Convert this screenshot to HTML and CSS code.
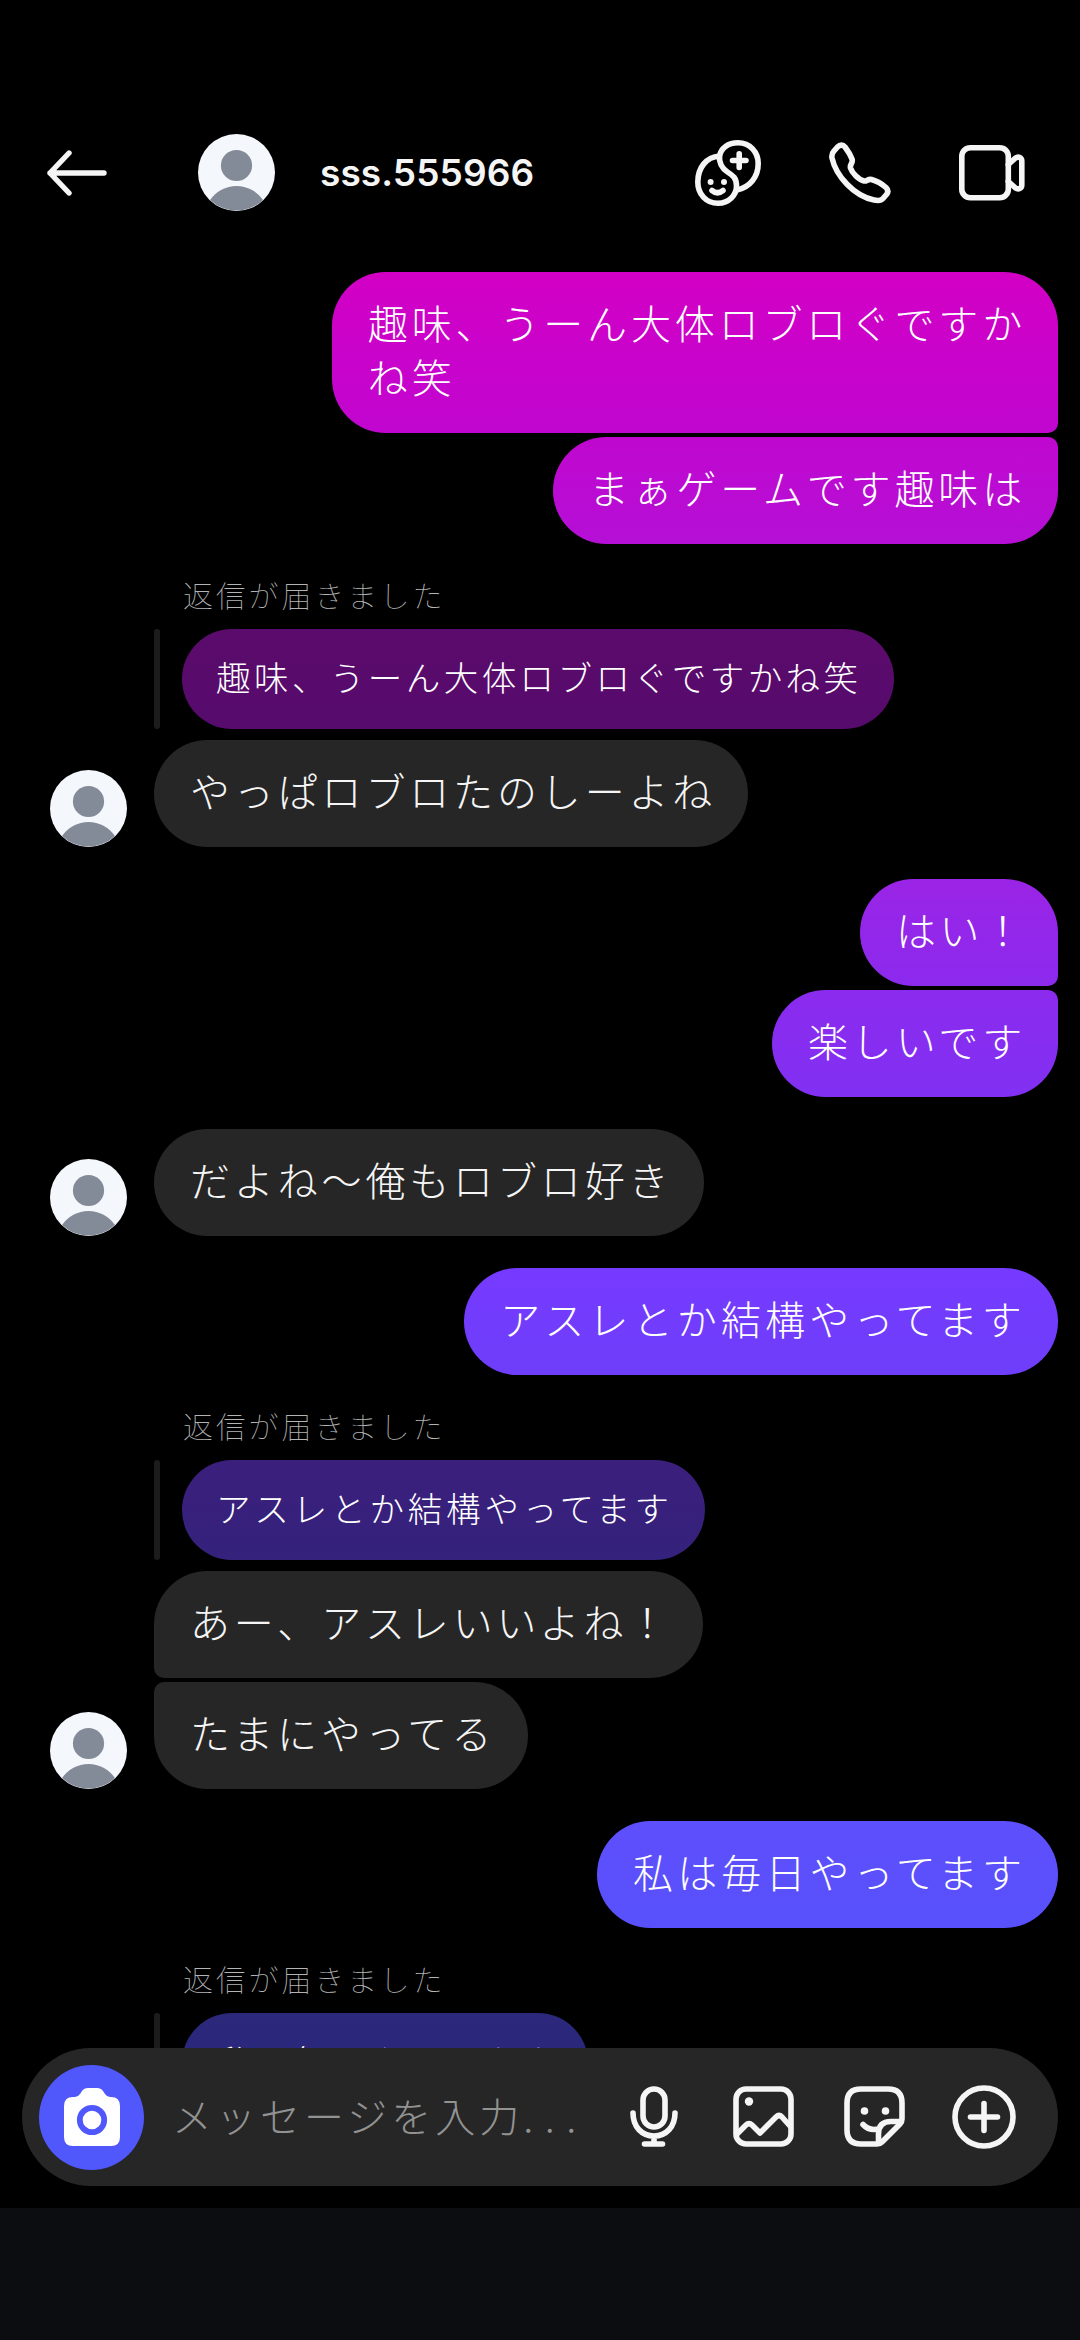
FILE: index.html
```html
<!DOCTYPE html>
<html lang="ja">
<head>
<meta charset="utf-8">
<title>sss.555966</title>
<link rel="stylesheet" href="styles.css">
</head>
<body>
<svg class="defs" aria-hidden="true">
  <symbol id="person" viewBox="0 0 77 77">
    <circle cx="38.5" cy="38.5" r="38.5" fill="#f4f7fb"/>
    <circle cx="38.5" cy="31.5" r="15.6" fill="#848b98"/>
    <path d="M12 66A32 32 0 0 1 65 66A38.5 38.5 0 0 1 12 66Z" fill="#848b98"/>
  </symbol>
</svg>
<div class="screen">
  <header class="header">
    <svg class="back" viewBox="0 0 60 46"><path d="M22 3L3 23L22 43M3 23H57"/></svg>
    <svg class="avatar"><use href="#person"/></svg>
    <h1 class="name">sss.555966</h1>
    <div class="actions">
      <svg class="icon" width="66" height="66" viewBox="0 0 66 66">
        <path d="M24.5 16C26 8 33 2.800 43 2.800C55 2.800 63.200 12 63.200 23.500C63.200 37 55 47 42 50"/>
        <path d="M24.500 16C11 17 2.800 28 2.800 42C2.800 54 11 63.200 23 63.200C34 63.200 41.500 55 41.500 46C41.500 38 38 35.500 32.500 32C26.500 28 24 23 24.500 16Z"/>
        <path d="M37.500 20.500H51M44.200 13.700V27.500M17 50.500Q22.500 55 28 50.500" stroke-width="5.600"/>
        <circle class="dot" cx="15.600" cy="42" r="3"/><circle class="dot" cx="29" cy="42" r="3"/>
      </svg>
      <svg class="icon" width="62" height="62" viewBox="0 0 62 62">
        <path d="M8.500 5C11 2.500 14 2.500 16 5C19 9 21.500 13 23 17C24.500 21 20.500 22 21.500 26C23 31 30 38 35 39C38 39.500 39 36.500 42.500 37.500C48 39 53 42 57 45.500C59.500 48 59.500 50 57.500 52.500L54 56.500C52 58.800 49 58.800 45 58C25 54 7 34 3 16C2.500 13 3 11 5 9Z"/>
      </svg>
      <svg class="icon" width="66" height="56" viewBox="0 0 66 56">
        <rect x="2.800" y="2.800" width="46.500" height="50" rx="8.500"/>
        <path d="M49.300 19.500L56.500 13C59.500 11 62.800 12.500 62.800 16V40C62.800 43.500 59.500 45 56.500 43L49.300 36.500"/>
      </svg>
    </div>
  </header>

  <main class="thread">
    <p class="bubble sent joins-below tone-1">趣味、うーん大体ロブロぐですか<br>ね笑</p>
    <p class="bubble sent joins-above tone-2">まぁゲームです趣味は</p>

    <p class="reply-label">返信が届きました</p>
    <div class="quote"><p class="bubble quoted tone-3">趣味、うーん大体ロブロぐですかね笑</p></div>
    <div class="received">
      <svg class="avatar"><use href="#person"/></svg>
      <p class="bubble">やっぱロブロたのしーよね</p>
    </div>

    <p class="bubble sent new-group joins-below tone-4">はい！</p>
    <p class="bubble sent joins-above tone-5">楽しいです</p>

    <div class="received new-group">
      <svg class="avatar"><use href="#person"/></svg>
      <p class="bubble">だよね～俺もロブロ好き</p>
    </div>

    <p class="bubble sent new-group tone-6">アスレとか結構やってます</p>

    <p class="reply-label">返信が届きました</p>
    <div class="quote"><p class="bubble quoted tone-7">アスレとか結構やってます</p></div>
    <div class="received">
      <svg class="avatar"><use href="#person"/></svg>
      <div class="stack">
        <p class="bubble in-first">あー、アスレいいよね！</p>
        <p class="bubble in-last">たまにやってる</p>
      </div>
    </div>

    <p class="bubble sent new-group tone-8">私は毎日やってます</p>

    <p class="reply-label">返信が届きました</p>
    <div class="quote"><p class="bubble quoted tone-9">私は毎日やってます</p></div>
  </main>

  <div class="composer">
    <div class="camera">
      <svg width="56" height="58" viewBox="0 0 56 58">
        <path fill="#fff" d="M0 18Q0 9 9 9H11Q14 9 16 6L18 3Q20 0 24 0H33Q37 0 39 3L41 6Q43 9 46 9H47Q56 9 56 18V49Q56 58 47 58H9Q0 58 0 49Z"/>
        <circle cx="28" cy="32" r="12.200" fill="none" stroke="#5158fb" stroke-width="5.800"/>
      </svg>
    </div>
    <p class="placeholder">メッセージを入力<span class="dots">...</span></p>
    <div class="tools">
      <svg class="icon" width="48" height="62" viewBox="0 0 48 62">
        <rect x="13" y="3" width="22" height="38" rx="11"/>
        <path d="M3 27C3 41 12 50 24 50S45 41 45 27M24 50V58M14.500 58H32.500"/>
      </svg>
      <svg class="icon" width="62" height="62" viewBox="0 0 62 62">
        <rect x="3" y="3" width="55" height="55" rx="10"/>
        <path d="M4 48L13 39Q16 36 19 39L27 47L43 31Q46 28 49 31L57 40"/>
        <circle class="dot" cx="16" cy="15.500" r="4.200"/>
      </svg>
      <svg class="icon" width="62" height="62" viewBox="0 0 62 62">
        <path d="M17 3H44Q58 3 58 17V33Q58 36 56 38L38 56Q36 58 33 58H17Q3 58 3 44V17Q3 3 17 3Z"/>
        <path d="M34.500 57V48Q34.500 35.500 47 35.500H57M19 38.500Q25 45 34 43"/>
        <circle class="dot" cx="20.500" cy="25" r="3.800"/><circle class="dot" cx="41.500" cy="25" r="3.800"/>
      </svg>
      <svg class="icon" width="64" height="64" viewBox="0 0 64 64">
        <circle cx="32" cy="32" r="29"/>
        <path d="M18.500 32H45.500M32 18.500V45.500"/>
      </svg>
    </div>
  </div>
  <div class="nav-area"></div>
</div>
</body>
</html>
```
FILE: styles.css
```css
* { box-sizing: border-box; }

body {
  margin: 0;
  background: #000;
  color: #f5f5f5;
  font-family: "Noto Sans CJK JP", sans-serif;
  font-weight: 300;
}

p, h1 { margin: 0; }

.defs { position: absolute; width: 0; height: 0; }

.screen {
  position: relative;
  display: flex;
  flex-direction: column;
  width: 1080px;
  height: 2340px;
  overflow: hidden;
}

.icon, .back {
  display: block;
  flex: none;
  fill: none;
  stroke: #f5f5f5;
  stroke-width: 5.6;
  stroke-linecap: round;
  stroke-linejoin: round;
}

.icon .dot { fill: #f5f5f5; stroke: none; }

.avatar {
  display: block;
  flex: none;
  width: 77px;
  height: 77px;
}

/* Header */
.header {
  display: flex;
  flex: none;
  align-items: center;
  height: 272px;
  padding: 73px 55px 0 47px;
}

.back { width: 60px; height: 46px; margin-right: 91px; stroke-width: 5.4; }

.name {
  margin-left: 45px;
  font: 600 37px/46px Inter, sans-serif;
  letter-spacing: 0.1px;
}

.actions {
  display: flex;
  align-items: center;
  gap: 68px;
  margin-left: auto;
}

/* Messages */
.thread {
  display: flex;
  flex: none;
  flex-direction: column;
  height: 1936px;
  padding: 0 22px 0 50px;
  overflow: hidden;
}

.bubble {
  flex: none;
  width: max-content;
  padding: 23px 32px 30px 36px;
  border-radius: 54px;
  background: #262626;
  font-size: 40px;
  line-height: 54px;
  letter-spacing: 3.85px;
  white-space: nowrap;
}

.sent { align-self: flex-end; color: #fff; }
.joins-below { border-bottom-right-radius: 10px; }
.joins-above { margin-top: 4px; border-top-right-radius: 10px; }
.in-first { border-bottom-left-radius: 10px; }
.in-last { margin-top: 4px; border-top-left-radius: 10px; letter-spacing: 4.1px; }

.new-group { margin-top: 32px; }

.reply-label {
  flex: none;
  height: 85px;
  padding: 28px 0 0 133px;
  color: #b4b4b4;
  font-size: 30px;
  font-weight: 100;
  line-height: 44px;
  letter-spacing: 2.8px;
}

.quote {
  display: flex;
  flex: none;
  margin: 0 0 11px 104px;
}

.quote::before {
  content: "";
  width: 6px;
  margin-right: 22px;
  border-radius: 3px;
  background: #1c1c1c;
}

.quoted {
  height: 100px;
  padding: 20px 32px 0 34px;
  border-radius: 50px;
  color: #fff;
  font-size: 34.5px;
  letter-spacing: 3.45px;
}

.received {
  display: flex;
  flex: none;
  align-items: flex-end;
  gap: 27px;
}

.tone-1 { background: linear-gradient(#d300c5, #c006d0); }
.tone-2 { background: linear-gradient(#c008cf, #b50fd6); }
.tone-3 { background: linear-gradient(#5b0b6b, #560b6d); }
.tone-4 { background: linear-gradient(#9b24e6, #8b2aed); letter-spacing: 3.3px; }
.tone-5 { background: linear-gradient(#8b2bee, #8130f3); }
.tone-6 { background: linear-gradient(#763aff, #6e3efa); letter-spacing: 4.15px; }
.tone-7 { background: linear-gradient(#3b1f7c, #34227c); letter-spacing: 3.85px; }
.tone-8 { background: linear-gradient(#5e4ffc, #5851fb); letter-spacing: 4.1px; }
.tone-9 { background: linear-gradient(#2c287c, #28297c); letter-spacing: 3.7px; }

/* Message field, floating over the end of the thread */
.composer {
  position: absolute;
  left: 22px;
  top: 2048px;
  display: flex;
  align-items: center;
  width: 1036px;
  height: 138px;
  padding: 0 42px 0 17px;
  border-radius: 69px;
  background: #262626;
}

.camera {
  display: grid;
  flex: none;
  place-items: center;
  width: 105px;
  height: 105px;
  border-radius: 50%;
  background: #5158fb;
}

.placeholder {
  margin: -5px 0 0 28px;
  color: #929292;
  font-size: 40px;
  line-height: 54px;
  letter-spacing: 4px;
  white-space: nowrap;
}

.dots { letter-spacing: 11.5px; }

.tools {
  display: flex;
  align-items: center;
  gap: 49px;
  margin-left: auto;
}

.tools .icon:first-child { margin-right: 6px; }
.tools .icon:last-child { margin-left: -3px; }

.nav-area {
  flex: 1;
  background: #0c0d10;
}
```
